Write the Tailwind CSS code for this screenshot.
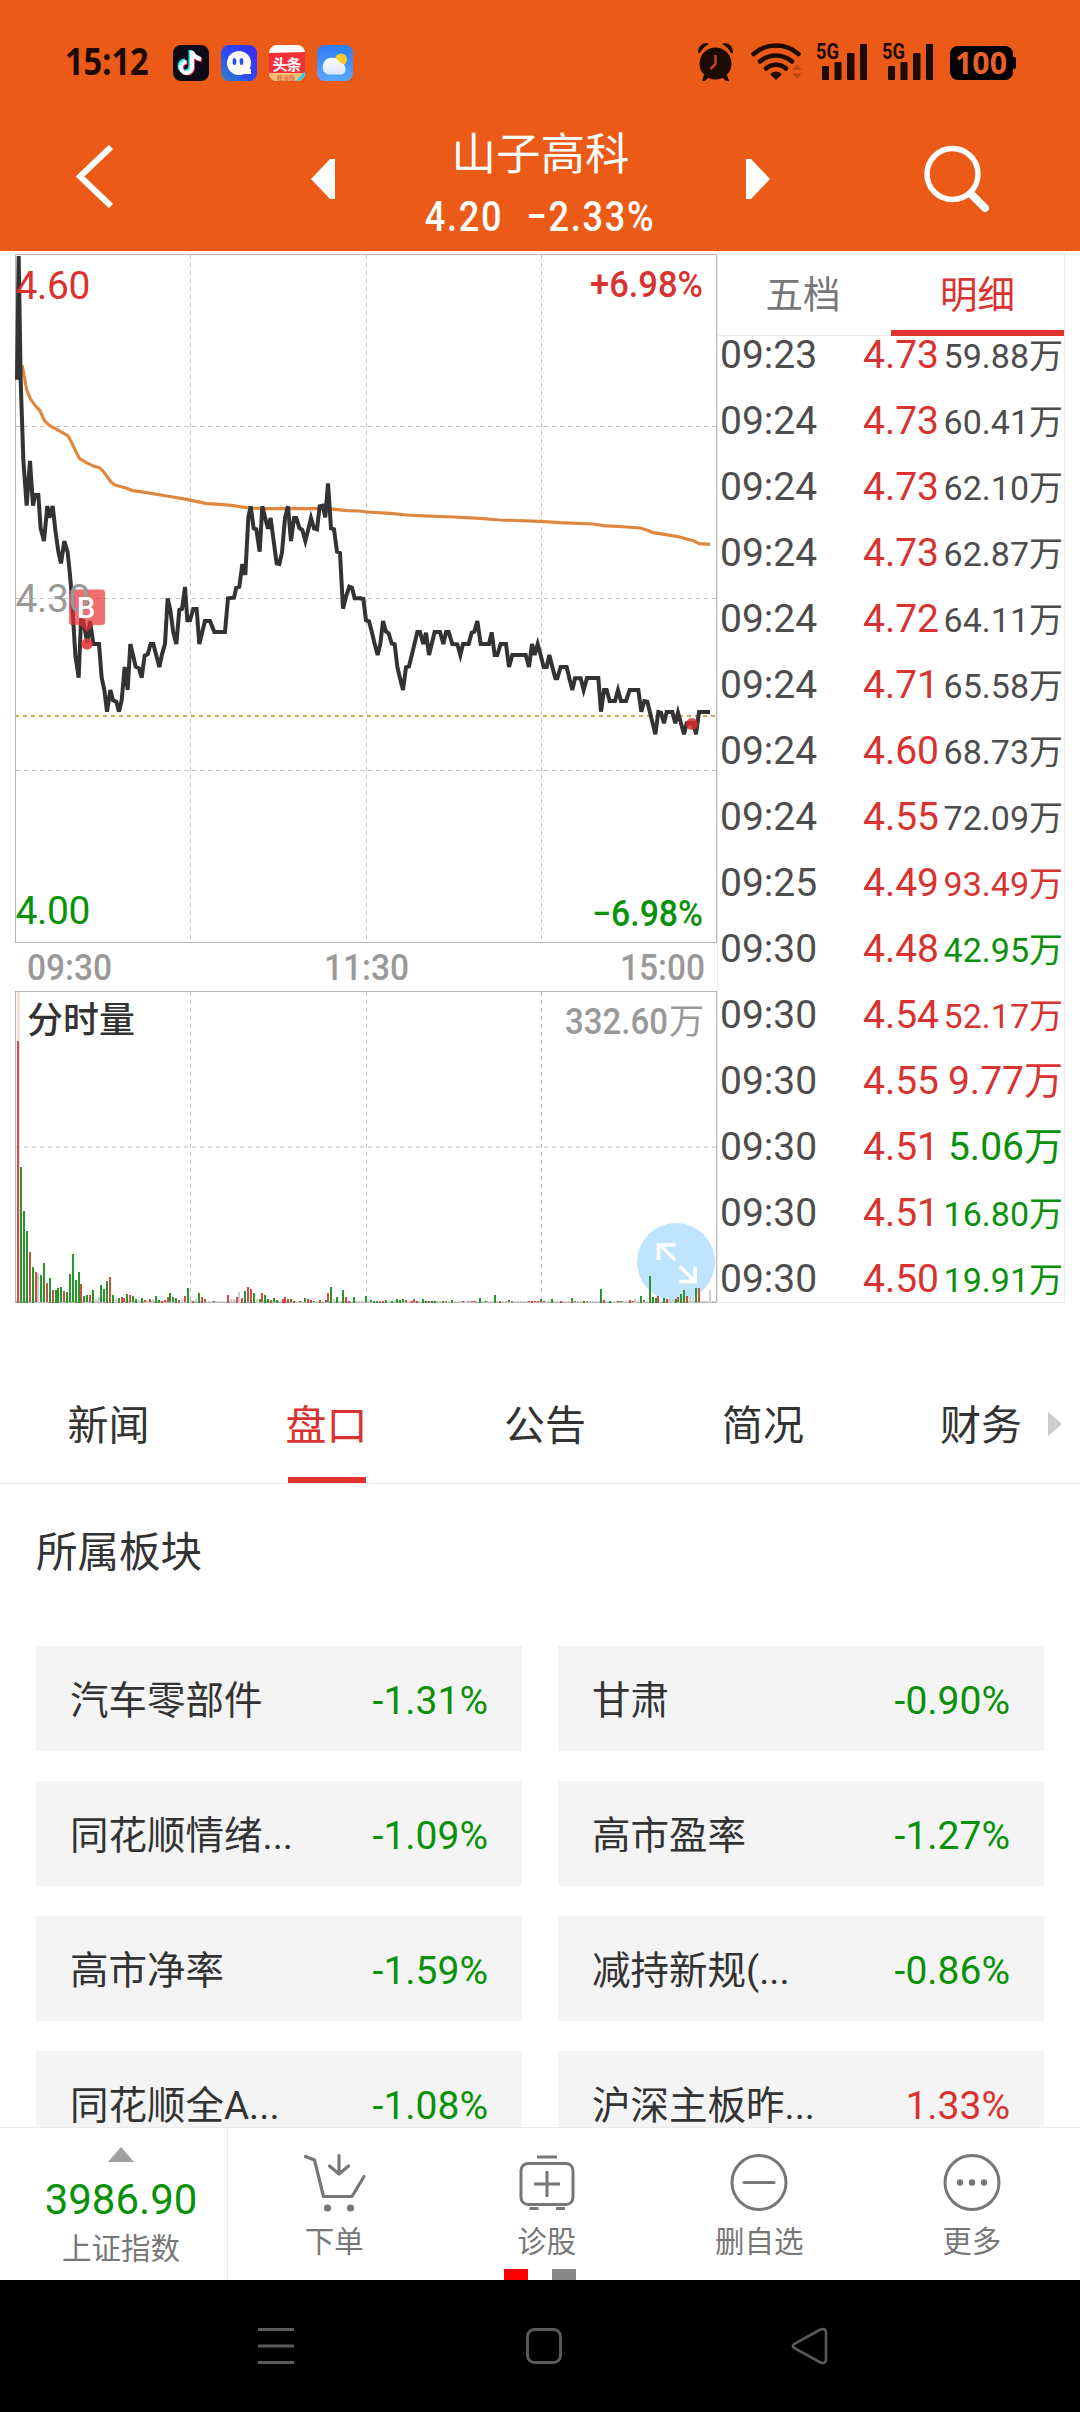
<!DOCTYPE html>
<html lang="zh-CN">
<head>
<meta charset="utf-8">
<title>山子高科</title>
<script src="https://cdn.jsdelivr.net/npm/@tailwindcss/browser@4"></script>
</head>
<body class="w-[1080px] h-[2412px] overflow-hidden bg-white font-[Roboto,'Noto_Sans_CJK_SC',sans-serif] text-[#333] flex flex-col">

<!-- Header -->
<header class="h-[251px] shrink-0 bg-[#eb5b17] flex flex-col">
  <div class="h-[126px] pl-[65px] pr-[63px] flex items-center justify-between text-[#1d0a00]">
    <div class="flex items-center">
      <div class="w-[108px]"><span class="inline-block origin-left scale-x-[.88] -translate-y-px text-[37px] leading-none font-bold font-['Noto_Sans',sans-serif]">15:12</span></div>
      <div class="flex gap-3">
        <svg class="w-9 h-9" viewBox="0 0 36 36"><rect width="36" height="36" rx="8" fill="#0b0a16"/><g fill="none" stroke-width="4"><path d="M18 6v16a5.500 5.500 0 1 1-5.500-5.500M18 7q2 6 9 7" stroke="#25f4ee" transform="translate(-.5 -1)"/><path d="M20 7v16a5.500 5.500 0 1 1-5.500-5.500M20 8q2 6 9 7" stroke="#fe2c55"/><path d="M19 6v16.500a5.500 5.500 0 1 1-5.500-5.500M19 7q2 6 9 7" stroke="#fff"/></g></svg>
        <svg class="w-9 h-9" viewBox="0 0 36 36"><defs><linearGradient id="qb" x1="0" y1="1" x2="1" y2="0"><stop offset="0" stop-color="#3987b8"/><stop offset=".4" stop-color="#2b4ff5"/><stop offset="1" stop-color="#3b2cf6"/></linearGradient></defs><rect width="36" height="36" rx="8" fill="url(#qb)"/><circle cx="18" cy="18" r="12" fill="#fff"/><path d="M22 24h8v5h-8z" fill="#fff"/><ellipse cx="13.500" cy="16.500" rx="1.900" ry="3.500" fill="#2b4ff5"/><ellipse cx="20.500" cy="16.500" rx="1.900" ry="3.500" fill="#2b4ff5"/></svg>
        <svg class="w-9 h-9" viewBox="0 0 36 36"><defs><clipPath id="tt"><rect width="36" height="36" rx="8"/></clipPath></defs><g clip-path="url(#tt)"><rect width="36" height="36" fill="#fff"/><path d="M0 8l36-1v22H0z" fill="#f5303a"/><path d="M0 28h36v8H0z" fill="#f8bd73"/><path d="M36 26v10h-9z" fill="#1fd3e6"/></g><text x="3.500" y="24.500" font-size="15" font-weight="700" fill="#fff" font-family="Noto Sans CJK SC" textLength="29">头条</text><text x="8" y="34.500" font-size="6" fill="#d0502a" font-family="Noto Sans CJK SC">极速版</text></svg>
        <svg class="w-9 h-9" viewBox="0 0 36 36"><defs><linearGradient id="wt" x1="0" y1="0" x2="0" y2="1"><stop offset="0" stop-color="#2d7df6"/><stop offset="1" stop-color="#5aa6fb"/></linearGradient><linearGradient id="cl" x1="0" y1="0" x2="0" y2="1"><stop offset="0" stop-color="#fff"/><stop offset="1" stop-color="#dbe6fb"/></linearGradient></defs><rect width="36" height="36" rx="8" fill="url(#wt)"/><circle cx="24" cy="14.500" r="6" fill="#fdc92c"/><path d="M12 29.500a7 7 0 0 1-6-9.500 9 9 0 0 1 17-2 6 6 0 0 1 2 11.500z" fill="url(#cl)"/></svg>
      </div>
    </div>
    <svg class="w-[322px] h-[50px]" viewBox="696 38 322 50" fill="#1d0a00">
      <circle cx="716.500" cy="63.500" r="16"/><path d="M699 53q0-9 8-10l3 1q-6 3-9 9zM734 53q0-9-8-10l-3 1q6 3 9 9zM705 75l-2 6h3l4-4zM728 75l2 6h-3l-4-4z"/><path d="M716.500 55v9l-5 5" stroke="#b9491a" stroke-width="2.500" fill="none"/>
      <g fill="none" stroke="#1d0a00" stroke-width="4.500" stroke-linecap="round"><path d="M754.500 54a34 34 0 0 1 45 0M761 61.500a24 24 0 0 1 32 0M767 68.500a15 15 0 0 1 20 0"/></g><path d="M771 74q6-5 12 0l-6 6z"/>
      <path d="M793 70l5-5.500 5 5.500zM793 73.500h10l-5 5.500z" fill="#c24a12"/>
      <text x="817" y="59" font-size="22" font-weight="700" font-family="Roboto" textLength="23" lengthAdjust="spacingAndGlyphs">5G</text>
      <rect x="823" y="66" width="7" height="14" rx="1"/><rect x="835.500" y="62" width="7" height="18" rx="1"/><rect x="848" y="53" width="7.500" height="27" rx="1"/><rect x="861" y="44" width="7" height="36" rx="1"/>
      <text x="883" y="59" font-size="22" font-weight="700" font-family="Roboto" textLength="23" lengthAdjust="spacingAndGlyphs">5G</text>
      <rect x="889" y="66" width="7" height="14" rx="1"/><rect x="901.500" y="62" width="7" height="18" rx="1"/><rect x="914" y="53" width="7.500" height="27" rx="1"/><rect x="927" y="44" width="7" height="36" rx="1"/>
      <rect x="951" y="46" width="63" height="34" rx="8" fill="#000"/><rect x="1010" y="57" width="7" height="12" rx="2" fill="#000"/>
      <text x="956" y="74" font-size="30" font-weight="700" font-family="Noto Sans" fill="#e8602a" textLength="52" lengthAdjust="spacingAndGlyphs">100</text>
    </svg>
  </div>
  <div class="flex-1 flex items-start justify-between px-[70px]">
    <svg class="w-[90px] h-[76px] mt-[12px]" viewBox="70 138 90 76"><path d="M111 147L80 176.500L111 206" fill="none" stroke="#fff" stroke-width="6"/></svg>
    <div class="flex items-start">
      <svg class="w-6 h-10 mt-[33px] mr-[91px]" viewBox="0 0 24 40"><path d="M24 0h-5L0 20l19 20h5z" fill="#fff"/></svg>
      <div class="w-[230px] text-white flex flex-col items-center">
        <div class="text-[44.500px] leading-[58px]">山子高科</div>
        <div class="w-[230px] h-[56px] pt-[12px] flex justify-center"><span class="inline-block scale-x-[.86] whitespace-pre text-[42px] leading-[42px] font-medium tracking-[2px]">4.20<span class="inline-block w-[27px]"></span>−2.33%</span></div>
      </div>
      <svg class="w-6 h-10 mt-[33px] ml-[90px]" viewBox="0 0 24 40"><path d="M0 0h5l19 20L5 40H0z" fill="#fff"/></svg>
    </div>
    <svg class="w-[90px] h-[80px] mt-[14px]" viewBox="920 140 90 80"><circle cx="952.500" cy="174" r="25.500" fill="none" stroke="#fff" stroke-width="5.500"/><path d="M971 194l14 14" stroke="#fff" stroke-width="8" stroke-linecap="round"/></svg>
  </div>
</header>

<!-- Charts and trade ticks -->
<section class="h-[1053px] shrink-0 flex">
  <svg class="w-[717px] h-[1053px] shrink-0" viewBox="0 251 717 1053" font-family="Roboto, 'Noto Sans CJK SC', sans-serif">
    <g fill="none" stroke="#b8b8b8" shape-rendering="crispEdges">
      <path d="M15.500 254.500H716.500V942.500H15.500zM15.500 991.500H716.500V1302.500H15.500z"/>
      <path d="M190.500 255V942M366.500 255V942M541.500 255V942M190.500 992V1302M366.500 992V1302M541.500 992V1302M16 426.500H716M16 598.500H716M16 770.500H716" stroke="#c4c4c4" stroke-dasharray="4 4"/>
      <path d="M16 1147H716" stroke="#dcdcdc" stroke-width="2" stroke-dasharray="4 4"/>
    </g>
    <path d="M15 716H716" stroke="#cfae56" stroke-width="2" stroke-dasharray="4 4"/>
    <circle cx="676" cy="1262" r="39" fill="#bfe4fe"/>
    <g fill="none" stroke="#fff" stroke-width="3.500"><path d="M675 1260l-16-16M658.500 1260v-15h17M680 1266.500l16 16M679.500 1281.500h15.500v-15"/></g>
    <g id="volume" shape-rendering="crispEdges"></g>
    <g fill="none" stroke="#e0873f" stroke-width="9.500" stroke-linejoin="round">
      <path transform="translate(0 240) scale(.33333)" d="M66 375L73 410L80 450L92 478L106 497L120 512L133 542L148 556L170 568L203 587L212 602L228 635L238 655L258 667L282 679L298 683L310 694L333 726L345 735L378 744L395 751L440 758L500 768L560 778L620 791L660 793L700 797L745 804L800 806L985 806L1040 812L1080 813"/>
      <path transform="translate(360 240) scale(.33333)" d="M0 813L20 816L90 820L140 825L200 828L280 831L360 835L420 840L540 844L600 848L700 852L730 857L800 861L840 864L860 870L880 878L950 889L1000 902L1017 911L1050 913"/>
    </g>
    <g fill="none" stroke="#333" stroke-width="12">
      <path transform="translate(0 240) scale(.33333)" d="M51 419L56 48L62 420L66 540L70 660L80 797L90 663L99 797L105 765L115 765L122 865L132 903L142 798L148 833L158 798L166 870L175 935L183 970L193 903L203 937L210 1005L216 1080L226 1245L236 1313L243 1140L250 1143L262 1210L270 1143L280 1212L297 1212L305 1313L313 1350L321 1415L331 1350L339 1381L349 1385L357 1415L365 1381L374 1281L383 1350L391 1212L399 1245L407 1280L417 1285L425 1313L434 1247L443 1243L452 1212L460 1212L468 1243L478 1281L486 1243L495 1212L503 1075L511 1110L520 1178L529 1212L538 1110L546 1107L555 1041L562 1141L570 1141L580 1107L590 1107L598 1212L607 1175L615 1143L630 1143L643 1176L675 1176L684 1075L702 1073L709 1043L718 1040L727 972L736 1005L745 832L752 799L761 865L769 868L779 935L787 799L795 832L804 866L812 834L821 903L830 970L838 972L846 937L855 834L864 799L873 903L882 834L889 834L898 864L907 870L916 903L925 868L933 834L942 865L951 868L959 799L968 797L976 832L984 730L993 865L1002 868L1011 935L1020 939L1029 1106L1038 1070L1048 1040L1056 1043L1064 1075L1084 1075"/>
      <path transform="translate(360 240) scale(.33333)" d="M0 1075L10 1077L18 1141L27 1144L36 1178L44 1212L53 1245L61 1212L69 1143L78 1175L86 1180L95 1210L104 1213L112 1280L120 1315L129 1350L138 1282L147 1279L156 1243L172 1176L180 1176L190 1212L198 1178L207 1245L224 1176L240 1176L250 1212L258 1176L266 1176L277 1212L292 1213L301 1245L309 1212L326 1212L335 1178L343 1175L352 1143L362 1212L387 1212L395 1177L404 1245L412 1245L422 1212L438 1212L447 1281L457 1245L497 1245L507 1281L516 1212L524 1245L533 1212L542 1245L551 1281L560 1281L568 1245L577 1281L586 1315L592 1315L602 1281L620 1281L628 1315L637 1350L645 1315L662 1315L671 1350L681 1314L715 1314L723 1415L732 1350L740 1350L749 1383L765 1383L774 1350L783 1383L798 1383L809 1350L835 1350L844 1415L853 1383L862 1385L878 1450L886 1483L895 1416L903 1418L912 1450L920 1416L937 1416L946 1450L954 1418L963 1450L972 1483L980 1450L1000 1450L1008 1483L1017 1416L1050 1416"/>
    </g>
    <path d="M72 589.500H102a3 3 0 0 1 3 3V622a3 3 0 0 1-3 3H94L87 632L80 625H72a3 3 0 0 1-3-3V592.500a3 3 0 0 1 3-3z" fill="#e92f33" fill-opacity=".7"/>
    <circle cx="87" cy="644" r="5.800" fill="#e53b3b" fill-opacity=".9"/>
    <circle cx="692" cy="724" r="6" fill="#d62b2f" fill-opacity=".85"/>
    <g font-size="39">
      <text x="15.500" y="299" fill="#d93331" textLength="75">4.60</text>
      <text x="15.500" y="612" fill="#999" textLength="75">4.30</text>
      <text x="15.500" y="924" fill="#099109" textLength="75">4.00</text>
    </g>
    <text x="77" y="617.500" font-size="29" font-weight="500" fill="#fff">B</text>
    <g font-size="36" font-weight="500">
      <text x="590" y="297" fill="#d93331" textLength="113" lengthAdjust="spacingAndGlyphs">+6.98%</text>
      <text x="592" y="926" fill="#099109" textLength="111" lengthAdjust="spacingAndGlyphs">−6.98%</text>
      <g fill="#999">
        <text x="27" y="980" textLength="85" lengthAdjust="spacingAndGlyphs">09:30</text>
        <text x="324" y="980" textLength="85" lengthAdjust="spacingAndGlyphs">11:30</text>
        <text x="620" y="980" textLength="85" lengthAdjust="spacingAndGlyphs">15:00</text>
        <text x="565" y="1034" textLength="103" lengthAdjust="spacingAndGlyphs">332.60</text>
        <text x="669" y="1034" font-size="35" font-weight="400">万</text>
      </g>
      <text x="27" y="1033" fill="#333" font-size="36">分时量</text>
    </g>
  </svg>
  <div class="w-[348px] mt-[2px] h-[1050px] border border-[#ebebeb] flex flex-col">
    <div class="h-[82px] shrink-0 border-b border-[#ebebeb] grid grid-cols-2 text-[37.500px] leading-[83px] text-center">
      <div class="text-[#777] pr-[3px]">五档</div>
      <div class="text-[#d93331] border-b-[6px] border-[#e23131] h-[82px]">明细</div>
    </div>
    <div id="ticks" class="flex-1 flex flex-col"></div>
  </div>
</section>

<!-- Section tabs -->
<nav class="h-[180px] shrink-0 relative border-b border-[#ebebeb] flex text-[41px] leading-[60px]">
  <div class="w-[217px] shrink-0 pt-[92px] text-center">新闻</div>
  <div class="w-[219px] shrink-0 pt-[92px] flex flex-col items-center justify-between text-[#d93331]"><span>盘口</span><i class="w-[78px] h-[6px] bg-[#e23131]"></i></div>
  <div class="w-[218px] shrink-0 pt-[92px] text-center">公告</div>
  <div class="w-[218px] shrink-0 pt-[92px] text-center">简况</div>
  <div class="w-[208px] shrink-0 pt-[92px] pl-[68px] whitespace-nowrap flex">财务<svg class="w-[14px] h-6 mt-[16px] ml-[26px] shrink-0" viewBox="0 0 14 24"><path d="M0 0l14 12L0 24z" fill="#ccc"/></svg></div>
</nav>

<!-- Sectors -->
<main class="h-[643px] shrink-0 overflow-hidden px-9">
  <h2 class="pt-[39px] h-[162px] text-[41.500px] leading-[60px]">所属板块</h2>
  <div id="sectors" class="grid grid-cols-2 gap-x-9 gap-y-[30px]"></div>
</main>

<!-- Toolbar -->
<footer class="h-[153px] shrink-0 relative border-t border-[#ebebeb] flex text-[29.500px] leading-[36px] text-[#777]">
  <div class="w-[228px] shrink-0 border-r border-[#ebebeb] flex flex-col items-center pt-[19px]">
    <div class="flex flex-col items-center pl-[15px]">
      <svg class="w-[26px] h-[15px]" viewBox="0 0 26 15"><path d="M13 0l13 15H0z" fill="#a0a0a0"/></svg>
      <span class="text-[42px] leading-[50px] mt-[13px] text-[#099109]">3986.90</span>
      <span class="mt-[6px]">上证指数</span>
    </div>
  </div>
  <div class="flex-1 grid grid-cols-4 pr-[2px]">
    <div class="flex flex-col items-center pt-[22px]"><svg class="w-[70px] h-[64px]" viewBox="299 2150 70 64" fill="none" stroke="#777" stroke-width="3.200" stroke-linecap="round" stroke-linejoin="round"><path d="M305.500 2156.500l9 3.500 9 36.500h28.500l12-20M339 2155.500v18M329.500 2166l9.500 8 9.500-8"/><circle cx="327.500" cy="2208" r="3.600" fill="#777" stroke="none"/><circle cx="350.500" cy="2208" r="3.600" fill="#777" stroke="none"/></svg><span class="mt-[10px]">下单</span></div>
    <div class="flex flex-col items-center pt-[22px]"><svg class="w-[70px] h-[64px]" viewBox="512.500 2150 70 64" fill="none" stroke="#777" stroke-width="3"><rect x="521.500" y="2163.500" width="52" height="41" rx="7"/><path d="M537.500 2157h20M530 2208.500h9M556.500 2208.500h9M534.500 2184h26M547.500 2171v26"/></svg><span class="mt-[10px]">诊股</span></div>
    <div class="flex flex-col items-center pt-[22px]"><svg class="w-[70px] h-[64px]" viewBox="0 0 70 64" fill="none" stroke="#777" stroke-width="3"><circle cx="35" cy="32.500" r="27"/><path d="M20 32.500h30" stroke-linecap="round"/></svg><span class="mt-[10px]">删自选</span></div>
    <div class="flex flex-col items-center pt-[22px]"><svg class="w-[70px] h-[64px]" viewBox="0 0 70 64" fill="none" stroke="#777" stroke-width="3"><circle cx="35" cy="32.500" r="27"/><g fill="#777" stroke="none"><circle cx="23" cy="32.500" r="3.200"/><circle cx="35" cy="32.500" r="3.200"/><circle cx="47" cy="32.500" r="3.200"/></g></svg><span class="mt-[10px]">更多</span></div>
  </div>
  <div class="absolute left-[504px] bottom-0 flex gap-6"><i class="w-6 h-[11px] bg-[#fb0000]"></i><i class="w-6 h-[11px] bg-[#888]"></i></div>
</footer>

<!-- System navigation -->
<div class="h-[132px] shrink-0 bg-black pl-[256px] pr-[250px] flex items-center justify-between">
  <svg class="w-10 h-10" viewBox="0 0 40 40" stroke="#5a5a5a" stroke-width="3"><path d="M2 3.500h36M2 20h36M2 36.500h36"/></svg>
  <svg class="w-10 h-10 ml-[2px]" viewBox="0 0 40 40" fill="none" stroke="#5a5a5a" stroke-width="3"><rect x="3.500" y="3.500" width="33" height="33" rx="7"/></svg>
  <svg class="w-10 h-10" viewBox="0 0 40 40" fill="none" stroke="#5a5a5a" stroke-width="2.600"><path d="M4 18.200L30.500 3.500Q35.500 1.500 36 6.500V33.500Q35.500 38.500 30.500 36.500L4 21.800Q1.500 20 4 18.200z"/></svg>
</div>

<script>
const tone = {k: 'text-[#4d4d4d]', r: 'text-[#d93331]', g: 'text-[#099109]'};
const ticks = [
  ['09:23','4.73','59.88','k'],['09:24','4.73','60.41','k'],['09:24','4.73','62.10','k'],['09:24','4.73','62.87','k'],
  ['09:24','4.72','64.11','k'],['09:24','4.71','65.58','k'],['09:24','4.60','68.73','k'],['09:24','4.55','72.09','k'],
  ['09:25','4.49','93.49','r'],['09:30','4.48','42.95','g'],['09:30','4.54','52.17','r'],['09:30','4.55','9.77','r'],
  ['09:30','4.51','5.06','g'],['09:30','4.51','16.80','g'],['09:30','4.50','19.91','g']];
document.getElementById('ticks').innerHTML = ticks.map(([t, p, v, c]) =>
  `<div class="h-[66px] shrink-0 pl-[2px] pr-px flex items-baseline whitespace-nowrap text-[39px] leading-[38px]">
    <span class="w-[143px] text-[#4d4d4d]">${t}</span><span class="w-[76px] text-[#d93331]">${p}</span>
    <span class="flex-1 flex justify-end items-baseline ${v.length > 4 ? 'text-[34px]' : 'text-[39px]'} ${tone[c]}">${v}万</span>
  </div>`).join('');

const sectors = [['汽车零部件','-1.31%'],['甘肃','-0.90%'],['同花顺情绪...','-1.09%'],['高市盈率','-1.27%'],
  ['高市净率','-1.59%'],['减持新规(...','-0.86%'],['同花顺全A...','-1.08%'],['沪深主板昨...','1.33%']];
document.getElementById('sectors').innerHTML = sectors.map(([n, p]) =>
  `<div class="h-[105px] bg-[#f4f4f4] px-[34px] pt-[5px] flex items-center justify-between text-[38.500px]">
    <span>${n}</span><span class="text-[39px] ${p[0] === '-' ? tone.g : tone.r}">${p}</span></div>`).join('');

// Volume bars: x, height (thirds of a pixel), direction
const bars = `55 785 r,64 408 g,72 275 g,81 215 g,90 151 r,98 108 g,107 91 r,115 89 n,124 82 g,132 118 g,141 58 r,150 74 g,158 39 r,167 39 g,175 45 g,184 46 g,193 34 r,201 33 g,210 85 g,218 145 g,227 69 g,236 92 g,244 56 r,253 19 g,261 22 g,270 22 r,279 39 g,287 10 n,296 16 n,304 52 g,313 40 g,322 65 g,330 77 r,339 23 g,348 14 n,356 14 g,365 17 r,373 13 r,382 27 g,391 22 r,399 19 g,408 12 g,416 9 n,425 14 g,434 7 r,442 5 n,451 10 r,460 10 n,468 21 g,477 9 g,486 5 r,494 7 r,503 16 r,511 28 g,520 16 g,529 14 g,537 8 r,546 12 n,555 19 r,563 45 g,572 7 n,580 6 r,589 10 n,598 29 g,606 17 r,615 10 r,641 4 g,684 24 r,693 10 n,701 10 n,710 17 r,718 33 n,727 15 r,736 35 g,744 46 r,753 41 r,761 29 g,770 12 n,779 10 g,787 28 r,796 23 g,804 12 g,813 8 r,821 13 g,830 8 g,848 11 r,856 17 r,865 12 r,873 10 g,882 6 r,899 4 g,916 13 g,925 12 r,934 8 r,942 4 g,960 9 r,977 7 g,985 28 r,994 47 g,1003 10 n,1011 17 g,1028 38 g,1037 17 r,1046 6 r,1063 17 g,1097 19 g,1114 7 g,1123 6 g,1131 6 g,1140 5 r,1149 5 r,1157 8 g,1175 5 g,1191 11 g,1200 9 g,1209 10 g,1217 7 r,1235 6 r,1243 10 r,1252 6 r,1270 11 g,1278 6 g,1287 5 r,1295 5 g,1304 5 g,1330 6 g,1338 4 r,1355 8 g,1390 4 r,1407 7 n,1415 4 r,1424 4 r,1441 14 g,1458 4 g,1484 23 g,1501 6 r,1527 7 g,1536 4 r,1588 4 r,1596 5 r,1605 4 r,1614 4 r,1622 10 g,1631 4 r,1657 11 g,1682 6 r,1717 14 g,1725 4 r,1751 5 g,1760 4 r,1803 41 g,1812 8 r,1829 6 g,1855 4 r,1863 4 g,1889 8 r,1898 4 r,1906 11 n,1924 21 g,1933 7 r,1949 80 g,1958 17 g,1967 14 g,1975 20 r,1992 15 g,2001 11 r,2010 12 n,2018 12 n,2027 11 g,2035 16 r,2043 26 g,2052 39 g,2061 21 r,2070 18 n,2078 18 n,2087 43 g,2096 43 r,2130 38 n`;
const fill = {r: '#cf4b47', g: '#27962b', n: '#cccccc'};
let out = '<rect x="17" y="992" width="3" height="310" fill="#fbdede"/><path d="M16 1301.500H716" stroke="#c4c4c4" stroke-dasharray="2 1"/>';
for (const b of bars.split(',')) {
  const [x, h, c] = b.split(' ');
  out += `<rect x="${Math.round(x / 3 - 1)}" y="${Math.round(1302.7 - h / 3)}" width="2" height="${Math.max(1, Math.round(h / 3))}" fill="${fill[c]}"/>`;
}
document.getElementById('volume').innerHTML = out;
</script>
</body>
</html>
